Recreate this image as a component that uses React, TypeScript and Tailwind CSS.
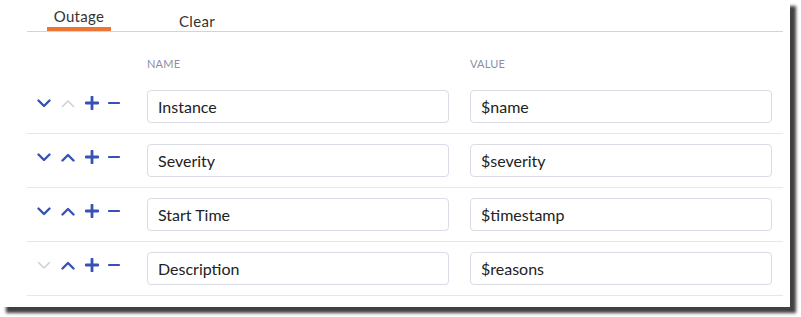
import React from 'react'

type Row = { name: string; value: string; canDown: boolean; canUp: boolean }

const rows: Row[] = [
    { name: 'Instance', value: '$name', canDown: true, canUp: false },
    { name: 'Severity', value: '$severity', canDown: true, canUp: true },
    { name: 'Start Time', value: '$timestamp', canDown: true, canUp: true },
    { name: 'Description', value: '$reasons', canDown: false, canUp: true },
]

function Chevron({ up, enabled }: { up?: boolean; enabled: boolean }) {
    return (
        <svg width="14" height="9" viewBox="0 0 14 9" className={enabled ? 'text-[#3652b4]' : 'text-[#cfd0d6]'}>
            <polyline
                points={up ? '1.5,7.5 7,2 12.5,7.5' : '1.5,1.5 7,7 12.5,1.5'}
                fill="none"
                stroke="currentColor"
                strokeWidth={enabled ? 2.4 : 1.6}
                strokeLinecap="round"
                strokeLinejoin="round"
            />
        </svg>
    )
}

function Plus() {
    return (
        <svg width="14" height="14" viewBox="0 0 14 14" className="text-[#3652b4]">
            <path d="M7 1v12M1 7h12" stroke="currentColor" strokeWidth="2.8" strokeLinecap="round" />
        </svg>
    )
}

function Minus() {
    return (
        <svg width="12" height="4" viewBox="0 0 12 4" className="text-[#3652b4]">
            <path d="M1 2h10" stroke="currentColor" strokeWidth="2.2" strokeLinecap="round" />
        </svg>
    )
}

export default function App() {
    return (
        <div className="h-[317px] w-[801px] bg-white" style={{ fontFamily: 'Lato, "Liberation Sans", sans-serif' }}>
            <div className="h-[307px] w-[790px] bg-white shadow-[6px_6px_3px_rgba(0,0,0,0.75)]">
                <div className="pl-[27px] pr-[7px]">
                    {/* tabs */}
                    <div className="flex h-[32px] items-end border-b border-[#d4d4d8] pl-[20px]">
                        <div className="flex h-full w-[64px] flex-col items-center justify-end">
                            <span className="text-[15px] leading-none tracking-[0.3px] text-[#333]">Outage</span>
                            <div className="mt-[3px] h-[4px] w-full bg-[#ec7535]" />
                        </div>
                        <div className="ml-[52px] flex h-full w-[68px] items-end justify-center pb-[2px]">
                            <span className="text-[15px] leading-none tracking-[0.3px] text-[#333]">Clear</span>
                        </div>
                    </div>

                    {/* header */}
                    <div className="flex h-[48px] items-center pt-[16px]">
                        <div className="w-[120px]" />
                        <div className="w-[302px] text-[11px] tracking-[0.2px] text-[#8a8ea6]">NAME</div>
                        <div className="ml-[21px] text-[11px] tracking-[0.2px] text-[#8a8ea6]">VALUE</div>
                    </div>

                    {/* rows */}
                    {rows.map((r) => (
                        <div key={r.name} className="flex h-[54px] items-center border-b border-[#e6e6ec]">
                            <div className="mb-[7px] flex w-[120px] items-center pl-[10px]">
                                <div className="flex w-[24px] justify-start">
                                    <Chevron enabled={r.canDown} />
                                </div>
                                <div className="flex w-[24px] justify-start">
                                    <Chevron up enabled={r.canUp} />
                                </div>
                                <div className="flex w-[23px] justify-start">
                                    <Plus />
                                </div>
                                <Minus />
                            </div>
                            <div className="flex h-[33px] w-[302px] items-center rounded-[4px] border border-[#dadbe4] pl-[10px] text-[16px] text-[#222]">
                                {r.name}
                            </div>
                            <div className="ml-[21px] flex h-[33px] w-[302px] items-center rounded-[4px] border border-[#dadbe4] pl-[10px] text-[16px] text-[#222]">
                                {r.value}
                            </div>
                        </div>
                    ))}
                </div>
            </div>
        </div>
    )
}
